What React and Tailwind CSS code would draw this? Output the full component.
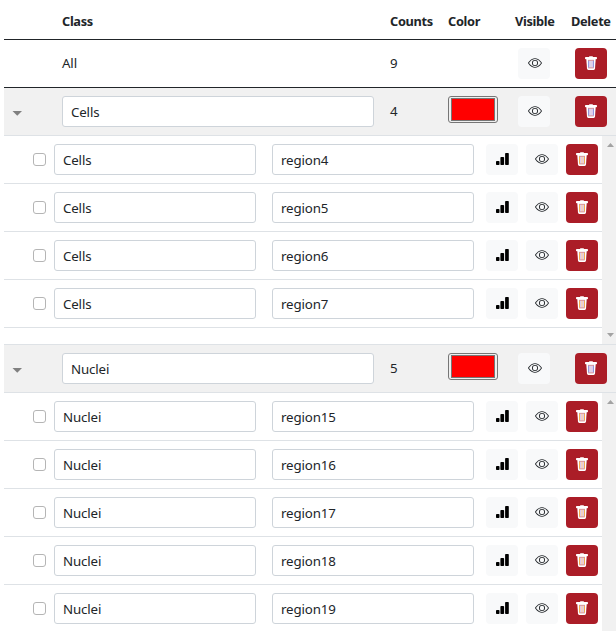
import React from "react";
import { BsEye } from "react-icons/bs";

const groups = [
  { name: "Cells", count: 4, regions: ["region4", "region5", "region6", "region7"] },
  { name: "Nuclei", count: 5, regions: ["region15", "region16", "region17", "region18", "region19"] },
];

function EyeButton({ shifted }) {
  return (
    <button className={`flex h-[31px] w-8 shrink-0 items-start justify-center rounded-[4px] bg-[#f8f9fa] pt-2 text-[#212529] ${shifted ? "pl-px" : ""}`}>
      <BsEye size={14} />
    </button>
  );
}

function ChartButton() {
  return (
    <button className="flex h-[31px] w-8 shrink-0 items-start justify-center rounded-[4px] bg-[#f8f9fa] pt-[9px] text-black">
      <svg width="13" height="12" viewBox="0 0 13 12" fill="currentColor">
        <rect x="0" y="8" width="3.5" height="4" rx="0.8" />
        <rect x="4.4" y="4" width="3.7" height="8" rx="0.8" />
        <rect x="9.1" y="0" width="3.7" height="12" rx="0.8" />
      </svg>
    </button>
  );
}

function TrashButton({ warm }) {
  return (
    <button className="flex h-[31px] w-8 shrink-0 items-start justify-center rounded-[4px] bg-[#ab1d27] pt-2">
      <svg width="14" height="14" viewBox="0 0 14 14" fill="none">
        <path d="M2.3 3H11.7L11 12.6Q10.9 13.9 9.7 13.9H4.3Q3.1 13.9 3 12.6Z" fill="white" />
        <path d="M4.5 4.6V11.6M9.5 4.6V11.6" stroke={warm ? "#f2ae4b" : "#9299dc"} strokeWidth="1" />
        <path d="M5.5 4.6V11.6M8.5 4.6V11.6" stroke="#ddcbed" strokeWidth="1" />
        <path d="M7 4.6V11.6" stroke={warm ? "#e8a27c" : "#c2a4d0"} strokeWidth="1" />
        <path d="M4 4.3H10M4.3 11.9H9.7" stroke="#bd4850" strokeWidth="0.6" />
        <path d="M1.8 1H5L5.4 0.3H8.6L9 1H12.2Q13 1 13 1.8V2.5Q13 3.2 12.2 3.2H1.8Q1 3.2 1 2.5V1.8Q1 1 1.8 1Z" fill="white" />
      </svg>
    </button>
  );
}

function Field({ value, wide }) {
  return (
    <div className={`flex h-[31px] shrink-0 items-center rounded-[3px] border border-[#ced4da] bg-white px-2 pt-px ${wide ? "w-[312px]" : "w-[202px]"}`}>
      {value}
    </div>
  );
}

function Arrow({ up }) {
  return (
    <svg width="7" height="4" viewBox="0 0 7 4" fill="#a3a3a3">
      <path d={up ? "M0 4L3.5 0L7 4Z" : "M0 0H7L3.5 4Z"} />
    </svg>
  );
}

function GroupRow({ group }) {
  return (
    <div className="flex h-12 items-start border-b border-[#dee2e6] bg-[#f1f1f1] pt-2">
      <div className="w-[58px] pl-2 pt-[15px]">
        <svg width="11" height="6" viewBox="0 0 11 6" fill="#808080">
          <path d="M0.5 0H10L5.25 4.8Z" />
        </svg>
      </div>
      <Field value={group.name} wide />
      <div className="ml-4 flex h-[31px] w-[58px] items-center">{group.count}</div>
      <div className="mr-5 h-[27px] w-[50px] shrink-0 rounded-[3px] border border-[#767676] bg-[#efefef] px-0.5 py-px">
        <div className="h-full border border-[#777777] bg-[#ff0000]" />
      </div>
      <EyeButton shifted />
      <div className="w-[25px] shrink-0" />
      <TrashButton />
    </div>
  );
}

function RegionRow({ name, region }) {
  return (
    <div className="flex h-12 items-start border-b border-[#dee2e6] pt-2">
      <div className="w-[50px] shrink-0 pl-[29px] pt-[9px]">
        <div className="h-[13px] w-[13px] rounded-[3px] border border-[#b5b5b5] bg-white" />
      </div>
      <Field value={name} />
      <div className="w-4 shrink-0" />
      <Field value={region} />
      <div className="ml-3 flex gap-2">
        <ChartButton />
        <EyeButton />
        <TrashButton warm />
      </div>
    </div>
  );
}

export default function App() {
  return (
    <div className="h-[631px] w-[616px] overflow-hidden bg-white pl-1 font-['Noto_Sans',sans-serif] text-[13.3px] leading-[21px] tracking-[-0.15px] text-[#212529]">
      <div className="flex h-10 items-center whitespace-nowrap border-b border-[#212529] pl-[58px] pt-1 text-[12.8px] font-bold tracking-[-0.33px]">
        <div className="w-[328px] shrink-0">Class</div>
        <div className="w-[58px] shrink-0">Counts</div>
        <div className="w-[67px] shrink-0">Color</div>
        <div className="w-14 shrink-0">Visible</div>
        <div>Delete</div>
      </div>
      <div className="flex h-12 items-start border-b border-[#212529] pl-[58px] pt-2">
        <div className="flex h-[31px] w-[328px] items-center">All</div>
        <div className="flex h-[31px] w-32 items-center">9</div>
        <EyeButton shifted />
        <div className="w-[25px]" />
        <TrashButton />
      </div>
      {groups.map((group, index) => (
        <div key={group.name}>
          <GroupRow group={group} />
          <div className={`flex ${index === 0 ? "h-[209px] border-b border-[#dee2e6]" : "h-60"}`}>
            <div className="w-[598px] shrink-0">
              {group.regions.map((region) => (
                <RegionRow key={region} name={group.name} region={region} />
              ))}
            </div>
            <div className="flex w-[14px] shrink-0 flex-col items-end justify-between bg-[#f1f1f1] py-[7px] pr-[2px]">
              <Arrow up />
              {index === 0 && <Arrow />}
            </div>
          </div>
        </div>
      ))}
    </div>
  );
}
